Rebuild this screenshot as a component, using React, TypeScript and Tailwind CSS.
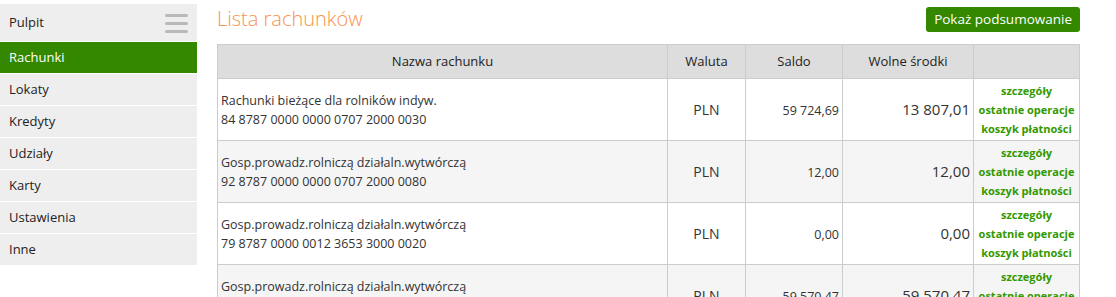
import React from "react";

const menu = ["Rachunki", "Lokaty", "Kredyty", "Udziały", "Karty", "Ustawienia", "Inne"];

const rows = [
  { name: "Rachunki bieżące dla rolników indyw.", nr: "84 8787 0000 0000 0707 2000 0030", saldo: "59 724,69", wolne: "13 807,01" },
  { name: "Gosp.prowadz.rolniczą działaln.wytwórczą", nr: "92 8787 0000 0000 0707 2000 0080", saldo: "12,00", wolne: "12,00" },
  { name: "Gosp.prowadz.rolniczą działaln.wytwórczą", nr: "79 8787 0000 0012 3653 3000 0020", saldo: "0,00", wolne: "0,00" },
  { name: "Gosp.prowadz.rolniczą działaln.wytwórczą", nr: "12 8787 0000 0012 3653 3000 0030", saldo: "59 570,47", wolne: "59 570,47" },
];

export default function App() {
  return (
    <div
      className="flex w-[1116px] h-[297px] overflow-hidden bg-white text-[#333]"
      style={{ fontFamily: '"Open Sans", "Noto Sans", sans-serif' }}
    >
      <aside className="w-[197px] shrink-0 pt-[4px] flex flex-col gap-[1px]">
        <div className="h-[37px] bg-[#eeeeee] flex items-center justify-between pl-[9px] pr-[9px] text-[13px] text-[#222]">
          <span>Pulpit</span>
          <svg width="23" height="20" viewBox="0 0 23 20">
            <rect x="0" y="1" width="23" height="3" rx="1.5" fill="#b9b9b9" />
            <rect x="0" y="9" width="23" height="3" rx="1.5" fill="#b9b9b9" />
            <rect x="0" y="17" width="23" height="3" rx="1.5" fill="#b9b9b9" />
          </svg>
        </div>
        {menu.map((m, i) => (
          <div
            key={m}
            className={
              i === 0
                ? "h-[31px] bg-[#338800] text-white flex items-center pl-[9px] text-[13px]"
                : "h-[31px] bg-[#eeeeee] text-[#222] flex items-center pl-[9px] text-[13px]"
            }
          >
            {m}
          </div>
        ))}
      </aside>

      <main className="flex-1 pl-[20px] pr-[37px]">
        <div className="flex items-center justify-between h-[44px] pb-[2px]">
          <h1 className="text-[20px] font-light text-[#f7944d] leading-none -mt-[5px]">Lista rachunków</h1>
          <button className="h-[25px] px-[8px] rounded-[3px] bg-[#338800] text-white text-[13.5px] -mt-[3px]">
            Pokaż podsumowanie
          </button>
        </div>
        <table className="w-[862px] border-collapse border border-[#cccccc] table-fixed">
          <colgroup>
            <col className="w-[450px]" />
            <col className="w-[78px]" />
            <col className="w-[97px]" />
            <col className="w-[131px]" />
            <col className="w-[106px]" />
          </colgroup>
          <thead>
            <tr className="h-[34px] bg-[#dddddd] text-[13px] text-[#222]">
              <th className="font-normal border border-[#cccccc]">Nazwa rachunku</th>
              <th className="font-normal border border-[#cccccc]">Waluta</th>
              <th className="font-normal border border-[#cccccc]">Saldo</th>
              <th className="font-normal border border-[#cccccc]">Wolne środki</th>
              <th className="font-normal border border-[#cccccc]"></th>
            </tr>
          </thead>
          <tbody>
            {rows.map((r, i) => (
              <tr key={i} className={i % 2 === 0 ? "h-[62px] bg-white" : "h-[62px] bg-[#f5f5f5]"}>
                <td className="border border-[#cccccc] pl-[3px] text-[12.5px] leading-[19px] align-middle">
                  <div>{r.name}</div>
                  <div>{r.nr}</div>
                </td>
                <td className="border border-[#cccccc] text-center text-[14px]">PLN</td>
                <td className="border border-[#cccccc] text-right pr-[3px] text-[12.5px] pt-[3px]">{r.saldo}</td>
                <td className="border border-[#cccccc] text-right pr-[3px] text-[15px]">{r.wolne}</td>
                <td className="border border-[#cccccc] text-center text-[11px] font-bold text-[#339900] leading-[19px]">
                  <div>szczegóły</div>
                  <div>ostatnie operacje</div>
                  <div>koszyk płatności</div>
                </td>
              </tr>
            ))}
          </tbody>
        </table>
      </main>
    </div>
  );
}
